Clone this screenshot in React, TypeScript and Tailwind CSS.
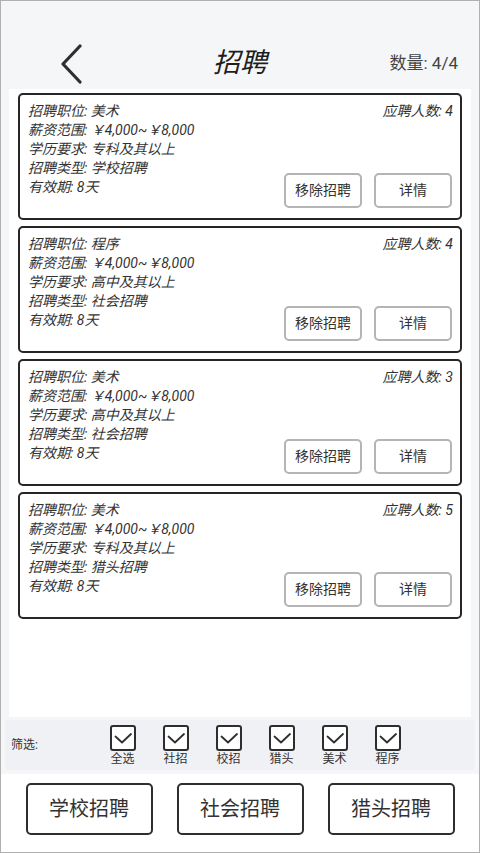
import React from 'react';

type Job = {
  title: string;
  salary: string;
  edu: string;
  kind: string;
  days: string;
  applicants: number;
};

const jobs: Job[] = [
  { title: '美术', salary: '￥4,000~￥8,000', edu: '专科及其以上', kind: '学校招聘', days: '8天', applicants: 4 },
  { title: '程序', salary: '￥4,000~￥8,000', edu: '高中及其以上', kind: '社会招聘', days: '8天', applicants: 4 },
  { title: '美术', salary: '￥4,000~￥8,000', edu: '高中及其以上', kind: '社会招聘', days: '8天', applicants: 3 },
  { title: '美术', salary: '￥4,000~￥8,000', edu: '专科及其以上', kind: '猎头招聘', days: '8天', applicants: 5 },
];

const filters = ['全选', '社招', '校招', '猎头', '美术', '程序'];

const font = { fontFamily: '"Roboto", "Noto Sans CJK SC", sans-serif' };

function JobCard({ job }: { job: Job }) {
  return (
    <div className="h-[127px] rounded-[5px] border-2 border-[#262626] bg-white pl-[8px] pr-[7px] pt-[7px] relative">
      <div className="italic text-[14px] leading-[19px] text-[#333]">
        <div className="flex justify-between">
          <span>招聘职位: {job.title}</span>
          <span>应聘人数: {job.applicants}</span>
        </div>
        <div>薪资范围: {job.salary}</div>
        <div>学历要求: {job.edu}</div>
        <div>招聘类型: {job.kind}</div>
        <div>有效期: {job.days}</div>
      </div>
      <div className="absolute right-[8px] bottom-[10px] flex gap-[12px]">
        <button className="w-[78px] h-[35px] rounded-[5px] border-2 border-[#b4b4b4] bg-white text-[14px] text-[#333]">
          移除招聘
        </button>
        <button className="w-[78px] h-[35px] rounded-[5px] border-2 border-[#b4b4b4] bg-white text-[14px] text-[#333]">
          详情
        </button>
      </div>
    </div>
  );
}

function CheckBox({ label }: { label: string }) {
  return (
    <div className="flex flex-col items-center w-[53px]">
      <div className="w-[26px] h-[26px] rounded-[3px] border-2 border-[#2e2e2e] bg-white flex items-center justify-center">
        <svg width="20" height="20" viewBox="0 0 20 20" fill="none">
          <path d="M2.5 8.5 L9 14.5 L18 6" stroke="#2e2e2e" strokeWidth="1.8" strokeLinecap="round" strokeLinejoin="round" />
        </svg>
      </div>
      <span className="text-[12px] leading-[15px] mt-[1px] text-[#333]">{label}</span>
    </div>
  );
}

export default function App() {
  return (
    <div style={font} className="w-[480px] h-[853px] border border-[#b0b0b0] bg-[#f5f6f8] flex flex-col overflow-hidden">
      {/* Header */}
      <div className="h-[88px] relative flex-none">
        <svg className="absolute left-[58px] top-[43px]" width="26" height="40" viewBox="0 0 26 40" fill="none">
          <path d="M21 2 L4 20 L21 38" stroke="#2f2f2f" strokeWidth="3.2" strokeLinecap="round" strokeLinejoin="round" />
        </svg>
        <div className="absolute left-0 right-0 top-[43px] text-center italic text-[27px] leading-[38px] text-[#1e1e1e]">
          招聘
        </div>
        <div className="absolute right-[21px] top-[50px] text-[17px] leading-[24px] text-[#444]">数量: 4/4</div>
      </div>

      {/* List */}
      <div className="mx-[8px] h-[628px] flex-none bg-white px-[9px] pt-[4px] flex flex-col gap-[6px]">
        {jobs.map((j, i) => (
          <JobCard key={i} job={j} />
        ))}
      </div>

      {/* Filter */}
      <div className="mx-[4px] mt-[3px] h-[50px] flex-none rounded-[4px] bg-[#f0f1f4] flex items-center relative">
        <span className="absolute left-[6px] top-[16px] text-[12px] text-[#333]">筛选:</span>
        <div className="flex ml-[91px] pt-[1px]">
          {filters.map((f) => (
            <CheckBox key={f} label={f} />
          ))}
        </div>
      </div>

      {/* Bottom buttons */}
      <div className="flex-1 bg-white mt-[4px] flex justify-center gap-[24px] pt-[9px]">
        {['学校招聘', '社会招聘', '猎头招聘'].map((b) => (
          <button
            key={b}
            className="w-[127px] h-[52px] rounded-[5px] border-2 border-[#2e2e2e] bg-white text-[20px] text-[#333]"
          >
            {b}
          </button>
        ))}
      </div>
    </div>
  );
}
